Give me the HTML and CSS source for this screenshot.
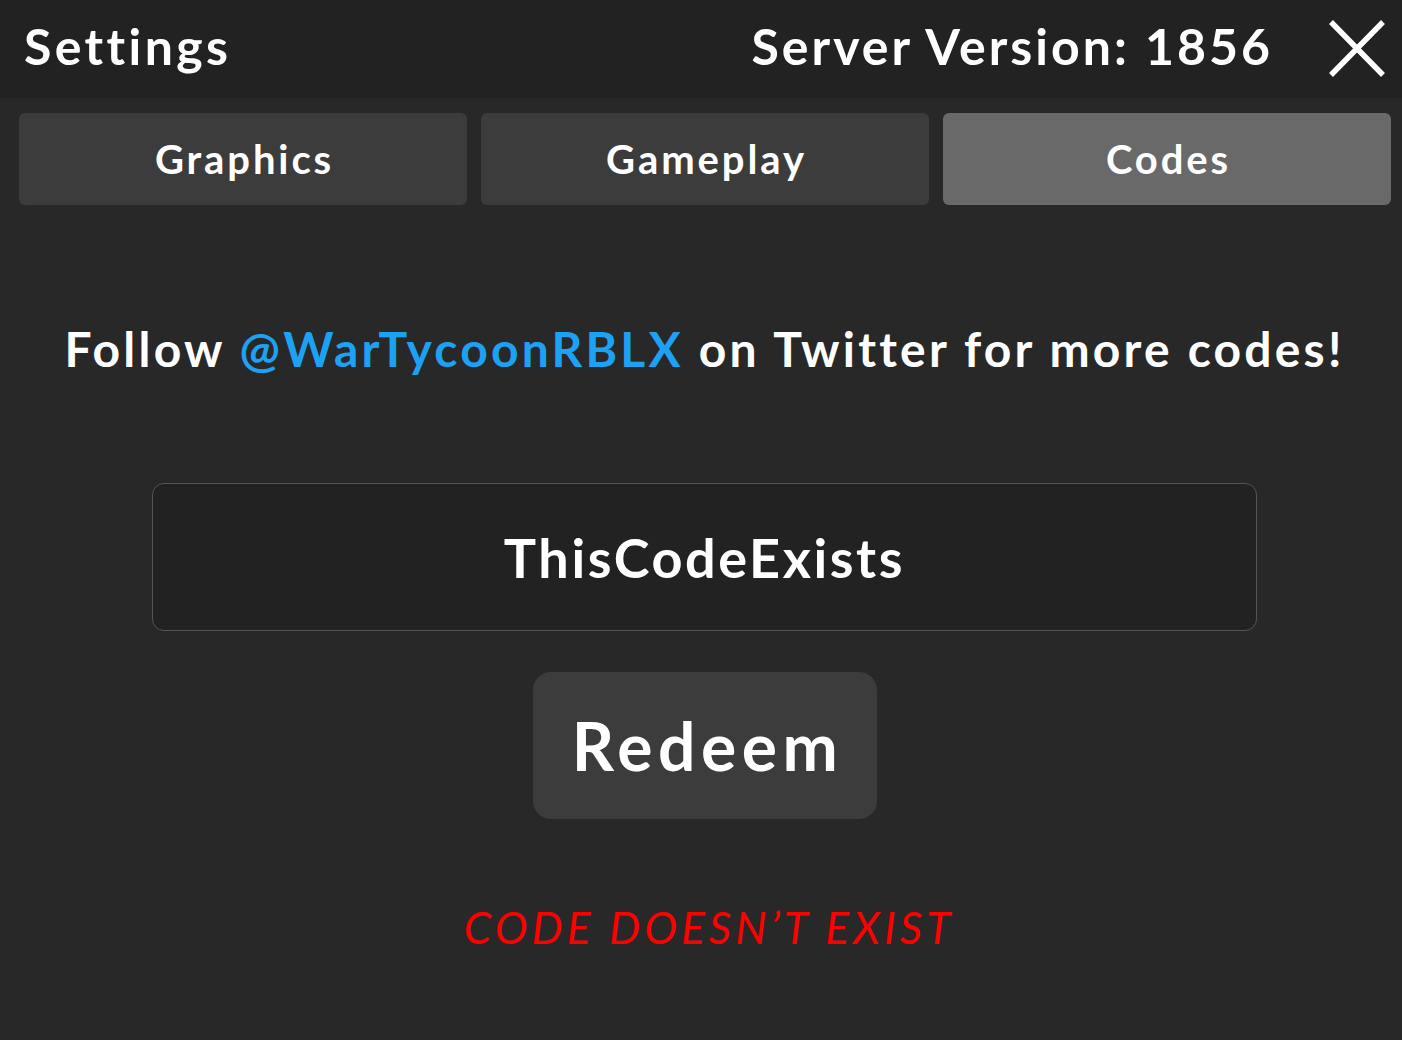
FILE: index.html
```html
<!DOCTYPE html>
<html>
<head>
<meta charset="utf-8">
<link rel="stylesheet" href="styles.css">
</head>
<body>
<div class="panel">
  <header class="topbar">
    <div class="title">Settings</div>
    <div class="right">
      <div class="version">Server Version: 1856</div>
      <svg class="close" width="58" height="58" viewBox="0 0 58 58">
        <path d="M3 2 L55 55 M55 2 L3 55" stroke="#ffffff" stroke-width="5.5" fill="none"/>
      </svg>
    </div>
  </header>
  <nav class="tabs">
    <div class="tab">Graphics</div>
    <div class="tab">Gameplay</div>
    <div class="tab active">Codes</div>
  </nav>
  <main class="content">
    <p class="follow">Follow <span class="handle">@WarTycoonRBLX</span> on Twitter for more codes!</p>
    <div class="codebox">ThisCodeExists</div>
    <div class="redeem">Redeem</div>
    <p class="error">CODE DOESN’T EXIST</p>
  </main>
</div>
</body>
</html>
```
FILE: styles.css
```css
html, body {
  margin: 0;
  padding: 0;
  background: #282828;
}
body {
  width: 1402px;
  height: 1040px;
  overflow: hidden;
  font-family: "Lato", "DejaVu Sans", sans-serif;
  color: #ffffff;
}
.topbar {
  height: 98px;
  box-sizing: border-box;
  background: #222222;
  display: flex;
  align-items: center;
  justify-content: space-between;
  padding: 0 16px 6px 24px;
}
.title, .version {
  font-size: 50px;
  font-weight: 700;
  letter-spacing: 3.4px;
}
.version {
  letter-spacing: 3px;
}
.right {
  display: flex;
  align-items: center;
  gap: 55px;
}
.close {
  display: block;
  margin-top: 6px;
}
.tabs {
  display: grid;
  grid-template-columns: repeat(3, 448px);
  gap: 14px;
  padding: 15px 11px 0 19px;
}
.tab {
  height: 92px;
  background: #3c3c3c;
  border-radius: 6px;
  display: flex;
  align-items: center;
  justify-content: center;
  font-size: 40px;
  font-weight: 700;
  letter-spacing: 2.9px;
  padding-left: 3px;
}
.tab.active { background: #696969; }
.content {
  display: flex;
  flex-direction: column;
  align-items: center;
  padding-left: 7px;
}
.follow {
  margin: 114px 0 0;
  font-size: 48px;
  font-weight: 700;
  letter-spacing: 3.2px;
  line-height: 60px;
}
.handle { color: #1da1f2; }
.codebox {
  margin-top: 104px;
  width: 1103px;
  height: 146px;
  background: #222222;
  border: 1px solid #555555;
  border-radius: 12px;
  display: flex;
  align-items: center;
  justify-content: center;
  font-size: 54px;
  font-weight: 700;
  letter-spacing: 2.6px;
  box-sizing: content-box;
}
.redeem {
  margin-top: 41px;
  width: 344px;
  height: 147px;
  box-sizing: border-box;
  padding-left: 6px;
  background: #3c3c3c;
  border-radius: 18px;
  display: flex;
  align-items: center;
  justify-content: center;
  font-size: 66px;
  font-weight: 700;
  letter-spacing: 5.5px;
}
.error {
  margin: 80px 0 0;
  padding-left: 9px;
  color: #ff0000;
  font-size: 44px;
  font-style: italic;
  font-weight: 400;
  letter-spacing: 4.1px;
  line-height: 56px;
}
```
